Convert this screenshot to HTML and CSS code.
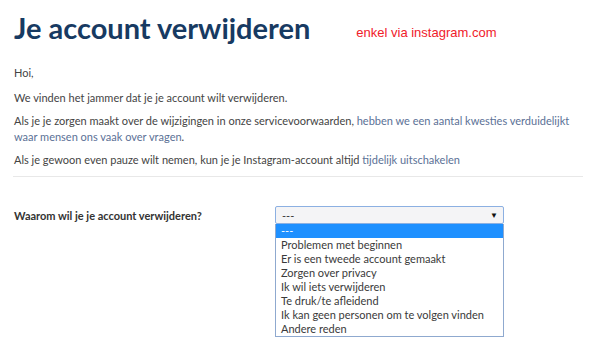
FILE: index.html
```html
<!DOCTYPE html>
<html lang="nl">
<head>
    <meta charset="UTF-8">
    <meta name="viewport" content="width=device-width, initial-scale=1.0">
    <title>Je account verwijderen</title>
    <link rel="stylesheet" href="styles.css">
</head>
<body>
    <div class="page">
        <div class="header">
            <h1>Je account verwijderen</h1>
            <span class="note">enkel via instagram.com</span>
        </div>

        <div class="intro">
            <p class="greeting">Hoi,</p>
            <p>We vinden het jammer dat je je account wilt verwijderen.</p>
            <p>Als je je zorgen maakt over de wijzigingen in onze servicevoorwaarden, <a href="#">hebben we een aantal kwesties verduidelijkt</a> <a href="#">waar mensen ons vaak over vragen</a>.</p>
            <p>Als je gewoon even pauze wilt nemen, kun je je Instagram-account altijd <a href="#">tijdelijk uitschakelen</a></p>
        </div>

        <div class="form-row">
            <label for="reason">Waarom wil je je account verwijderen?</label>
            <div class="select-wrap">
                <div class="select" id="reason">
                    <span>---</span>
                    <span class="arrow">&#9660;</span>
                </div>
                <ul class="options">
                    <li class="selected">---</li>
                    <li>Problemen met beginnen</li>
                    <li>Er is een tweede account gemaakt</li>
                    <li>Zorgen over privacy</li>
                    <li>Ik wil iets verwijderen</li>
                    <li>Te druk/te afleidend</li>
                    <li>Ik kan geen personen om te volgen vinden</li>
                    <li>Andere reden</li>
                </ul>
            </div>
        </div>
    </div>
</body>
</html>
```

FILE: styles.css
```css
body {
    margin: 0;
    background-color: #fff;
    font-family: Lato, "Open Sans", sans-serif;
    color: #444;
}

.page {
    width: 570px;
    padding: 10px 0 0 13px;
}

.header {
    display: flex;
    align-items: baseline;
    gap: 46px;
}

h1 {
    margin: 0;
    font-size: 29px;
    font-weight: 700;
    color: #173a62;
    padding-left: 1px;
}

.note {
    font-family: "Liberation Sans", Arial, sans-serif;
    font-size: 13px;
    color: #f0202a;
    position: relative;
    top: -2px;
}

.intro {
    margin-top: 20px;
    padding: 0 1px 8px;
    border-bottom: 1px solid #e8e8e8;
}

.intro p {
    margin: 0 0 7px;
    font-size: 11px;
    line-height: 16px;
}

.intro p.greeting {
    margin-bottom: 9px;
}

.intro p:last-child {
    margin-bottom: 0;
}

.intro a {
    color: #5b7196;
    text-decoration: none;
}

.form-row {
    display: flex;
    margin-top: 29px;
    padding-left: 1px;
}

label {
    width: 261px;
    font-size: 11px;
    font-weight: 700;
    color: #333;
    line-height: 20px;
}

.select-wrap {
    display: flex;
    flex-direction: column;
    width: 229px;
}

.select {
    display: flex;
    justify-content: space-between;
    align-items: center;
    height: 16px;
    padding: 0 5px 0 6px;
    border: 1px solid #8cb0e2;
    border-radius: 2px;
    background-color: #f4f4f6;
    font-size: 11px;
    color: #333;
}

.arrow {
    font-size: 8px;
    color: #111;
}

.options {
    margin: 0;
    padding: 0;
    list-style: none;
    border: 1px solid #8fa9cf;
    border-top: none;
    background-color: #fff;
}

.options li {
    padding-left: 5px;
    font-size: 11px;
    line-height: 14px;
    color: #3a3a3a;
}

.options li.selected {
    background-color: #1e90ff;
    color: #fff;
}
```
